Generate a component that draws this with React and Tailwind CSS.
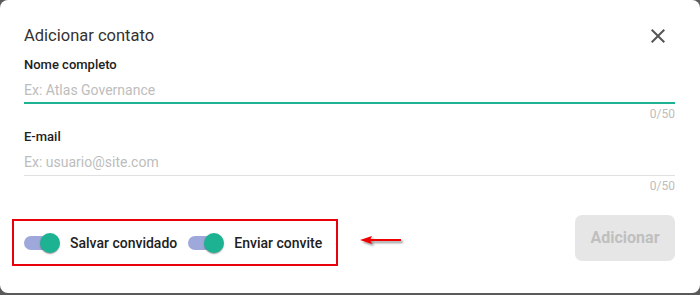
import React from "react";

function Toggle() {
  return (
    <div className="relative w-[36px] h-[20px] shrink-0">
      <div className="absolute left-0 top-[3px] w-[34px] h-[14px] rounded-full bg-[#9fa8da]" />
      <div className="absolute left-[16px] top-0 w-[20px] h-[20px] rounded-full bg-[#1db392] shadow-[0_2px_1px_-1px_rgba(0,0,0,0.2),0_1px_1px_0_rgba(0,0,0,0.14),0_1px_3px_0_rgba(0,0,0,0.12)]" />
    </div>
  );
}

export default function App() {
  return (
    <div className="w-[700px] h-[295px] bg-[#5a5a5a] overflow-hidden" style={{ fontFamily: "Roboto, 'Liberation Sans', sans-serif" }}>
      <div className="w-[700px] h-[293px] bg-white rounded-[8px] pt-[24px] pl-[24px] pr-[25px] flex flex-col">
        <div className="flex items-center justify-between h-[24px]">
          <h2 className="text-[16.5px] leading-[24px] text-[#333333] font-normal">Adicionar contato</h2>
          <svg width="24" height="24" viewBox="0 0 24 24" className="mr-[5px]" fill="#555555">
            <path d="M19 6.41L17.59 5 12 10.59 6.41 5 5 6.41 10.59 12 5 17.59 6.41 19 12 13.41 17.59 19 19 17.59 13.41 12z" />
          </svg>
        </div>

        <label className="mt-[9px] text-[13px] leading-[16px] font-medium text-[#212121]">Nome completo</label>
        <div className="mt-[7px] pb-[2px] border-b-2 border-[#1db392]">
          <input
            className="block w-full h-[20px] text-[14px] leading-[20px] text-[#333] outline-none placeholder:text-[#bdbdbd] bg-transparent"
            placeholder="Ex: Atlas Governance"
          />
        </div>
        <div className="mt-[2px] text-right text-[12px] leading-[16px] text-[#bdbdbd]">0/50</div>

        <label className="mt-[7px] text-[13px] leading-[16px] font-medium text-[#212121]">E-mail</label>
        <div className="mt-[7px] pb-[3px] border-b border-[#e0e0e0]">
          <input
            className="block w-full h-[20px] text-[14px] leading-[20px] text-[#333] outline-none placeholder:text-[#bdbdbd] bg-transparent"
            placeholder="Ex: usuario@site.com"
          />
        </div>
        <div className="mt-[2px] text-right text-[12px] leading-[16px] text-[#bdbdbd]">0/50</div>

        <div className="mt-[21px] flex items-start">
          <div className="mt-[4px] -ml-[12px] h-[47px] border-2 border-[#e8000b] flex items-center pl-[10px] pr-[14px]">
            <Toggle />
            <span className="ml-[10px] text-[14px] leading-[20px] font-medium text-[#212121]">Salvar convidado</span>
            <div className="ml-[11px]">
              <Toggle />
            </div>
            <span className="ml-[10px] text-[14px] leading-[20px] font-medium text-[#212121]">Enviar convite</span>
          </div>
          <svg width="48" height="16" viewBox="0 0 48 16" className="ml-[22px] mt-[20px]" style={{ overflow: "visible" }}>
            <defs>
              <filter id="sh" x="-20%" y="-50%" width="140%" height="200%">
                <feGaussianBlur in="SourceAlpha" stdDeviation="1" />
                <feOffset dx="2" dy="2" result="b" />
                <feComponentTransfer><feFuncA type="linear" slope="0.45" /></feComponentTransfer>
                <feMerge>
                  <feMergeNode />
                  <feMergeNode in="SourceGraphic" />
                </feMerge>
              </filter>
            </defs>
            <g filter="url(#sh)" fill="#ee0000">
              <rect x="10" y="4" width="31" height="2" />
              <polygon points="0,5 12,1 10,5 12,9" />
            </g>
          </svg>
          <button className="ml-auto w-[100px] h-[46px] rounded-[7px] bg-[#e6e6e6] text-[16px] font-bold text-[#bfbfbf]">
            Adicionar
          </button>
        </div>
      </div>
    </div>
  );
}
